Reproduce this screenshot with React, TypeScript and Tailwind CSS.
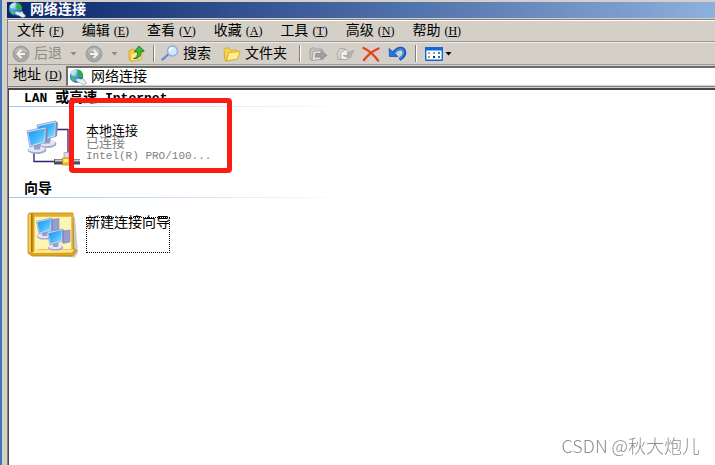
import type { ReactNode } from 'react';

const FONT = 'font-["Liberation_Mono","Noto_Sans_CJK_SC",monospace]';

const menus = [
  { label: '文件', hotkey: 'F' },
  { label: '编辑', hotkey: 'E' },
  { label: '查看', hotkey: 'V' },
  { label: '收藏', hotkey: 'A' },
  { label: '工具', hotkey: 'T' },
  { label: '高级', hotkey: 'N' },
  { label: '帮助', hotkey: 'H' },
];

function Hotkey({ letter }: { letter: string }) {
  return (
    <span className="ml-1 font-['Liberation_Serif',serif] text-xs">
      (<span className="underline underline-offset-1">{letter}</span>)
    </span>
  );
}

function GlobeIcon() {
  return (
    <svg width="18" height="16" viewBox="0 0 18 16" className="shrink-0">
      <defs>
        <radialGradient id="globe" cx="0.35" cy="0.3" r="0.8">
          <stop offset="0" stopColor="#b8e6ff" />
          <stop offset="0.45" stopColor="#2f8fe8" />
          <stop offset="1" stopColor="#0a3fa0" />
        </radialGradient>
      </defs>
      <circle cx="7.500" cy="7" r="6.700" fill="url(#globe)" />
      <path d="M1.500 4.500C3 1.500 5.500 .3 7.500 .6L7.800 2.400 6 3.400 5.400 5.400 3.600 6.400Z" fill="#bfe8d8" />
      <path d="M8.500 1.200 11.500 1.500l2.300 3.300.2 3-2.600 1.200-1.800-2L8 5.500 9 3.500Z" fill="#2fae3a" />
      <path d="M2 8 5.500 8.500l1.500 2-1.500 2.400L3 11.300Z" fill="#48c052" />
      <path d="M7 10.500C8.500 8 11 11 13.200 9.800c1.200-.7 2 .2 1.600 1.200l2.600 2.400c.6 1.200-1.400 2.200-2.800 2-2-.2-2.400-1.400-4-1.900C8.800 13 6.500 12.500 7 10.500Z" fill="#dce8f4" stroke="#7f98b4" strokeWidth=".6" />
      <path d="M10.500 12.500 15.500 14.200" stroke="#fff" strokeWidth="1" />
    </svg>
  );
}

function RoundArrow({ flip = false }: { flip?: boolean }) {
  return (
    <svg width="18" height="18" viewBox="0 0 18 18" className={flip ? 'shrink-0 -scale-x-100' : 'shrink-0'}>
      <circle cx="9" cy="9" r="8" fill="#a6a6a3" stroke="#989894" strokeWidth=".8" />
      <path d="M2.500 8a6.600 6 0 0 1 13 0c-3-2-9-2-13 0Z" fill="#bdbdba" />
      <path d="M9.500 5 5.500 9l4 4M6 9h7" stroke="#f2f2f0" strokeWidth="2" fill="none" />
    </svg>
  );
}

function UpFolderIcon() {
  return (
    <svg width="17" height="17" viewBox="0 0 17 17">
      <path d="M1 5.500 5.500 4l2 1.500 6-.5 1 1-1.500 8.500L3 16.500 1 14Z" fill="#f7cf4a" stroke="#d09c20" strokeWidth=".8" />
      <path d="M3 8.500 13.500 7l1.500 1.200-2.500 6.300L3 16Z" fill="#ffeb8a" stroke="#dcab34" strokeWidth=".6" />
      <path d="M5.500 13.500c3-.5 4.300-2.800 4-6.800H6.200L11 1l5.300 5-3.200.7c.4 4.500-2.600 7.300-7.600 6.800Z" fill="#3fb83c" stroke="#17691d" strokeWidth=".8" />
    </svg>
  );
}

function SearchIcon() {
  return (
    <svg width="18" height="17" viewBox="0 0 18 17">
      <path d="m7 9.500-5.500 5" stroke="#4a7fc4" strokeWidth="2.200" strokeLinecap="round" />
      <path d="m6.500 9.500-5 4.500" stroke="#8cb8ec" strokeWidth=".8" />
      <circle cx="11.500" cy="6" r="5" fill="#c9eaff" stroke="#98a8d8" strokeWidth="1.300" />
      <path d="M8.500 6a3.200 3.200 0 0 1 3-3" stroke="#fff" strokeWidth="1.500" fill="none" />
    </svg>
  );
}

function FolderIcon() {
  return (
    <svg width="18" height="16" viewBox="0 0 18 16">
      <path d="M1 3.500 2.200 2H6l1.500 2H14v3L4.500 15 2 14.500Z" fill="#f8d250" stroke="#d8a828" strokeWidth=".9" />
      <path d="M5.500 6.500 17 5.500 14.500 13 3.500 15Z" fill="#ffee96" stroke="#dcab28" strokeWidth="1" />
    </svg>
  );
}

function MoveToIcon() {
  return (
    <svg width="19" height="16" viewBox="0 0 19 16" stroke="#a2a2a0" strokeWidth=".9">
      <path d="M1 3 5 1.500 6.500 3H13v10L3 14.500 1 13Z" fill="#c4c3c0" />
      <path d="M4 5.500 14.500 4.500V13L3 14.500Z" fill="#e2e1de" />
      <path d="M7 7.500h5V5l6 4.300-6 4.200V11H6Z" fill="#a0a09e" stroke="#8c8c8a" />
    </svg>
  );
}

function CopyToIcon() {
  return (
    <svg width="18" height="16" viewBox="0 0 18 16" stroke="#a6a6a4" strokeWidth=".9">
      <path d="M1 7 4 2.500h4.500L11 6l-1 7.500H2Z" fill="#d4d3d0" />
      <path d="M4.500 7.500 8 4h3l2.500 3-1.500 6.500H5Z" fill="#efeeeb" />
      <path d="M7.500 9.500H12L11 7l6.500-2.500-3 7L12.500 12Z" fill="#b4b3b0" />
    </svg>
  );
}

function DeleteIcon() {
  return (
    <svg width="18" height="16" viewBox="0 0 18 16">
      <path d="M1.500 2C6 4 12 9 16 14.500M16.500 2.500C11 5 5 10 2 14" stroke="#e8421a" strokeWidth="2.300" strokeLinecap="round" fill="none" />
    </svg>
  );
}

function UndoIcon() {
  return (
    <svg width="19" height="16" viewBox="0 0 19 16">
      <path d="M5 7.500C8 3.500 10.500 2.400 13 2.500c4 .4 4.600 5.500 1.800 8.200L11.500 13.500" stroke="#1459bc" strokeWidth="3.400" fill="none" />
      <path d="M1 2.500 1.500 10.500h8.500L7.500 8 4.500 5.500Z" fill="#2476d8" stroke="#1459bc" strokeWidth=".8" />
      <path d="M6 7C9 3.500 11 2.800 13 2.900c3.200.3 3.600 4.600 1.300 7L11.500 12.800" stroke="#3d8ee8" strokeWidth="1.500" fill="none" />
    </svg>
  );
}

function ViewsIcon() {
  return (
    <svg width="18" height="14" viewBox="0 0 18 14">
      <rect x=".7" y=".7" width="16.600" height="12.600" rx=".8" fill="#fff" stroke="#1267db" strokeWidth="1.400" />
      <path d="M0 0h18v3.500H0Z" fill="#1267db" />
      <path d="M3 5h2v2H3Z" fill="#a4a4c4" />
      <path d="M8 5h2v2H8Z" fill="#7aa0dc" />
      <path d="M13 5h2v2h-2Z" fill="#28a028" />
      <path d="M3 9h2v2H3Z" fill="#e09020" />
      <path d="M8 9h2v2H8Z" fill="#1030a0" />
      <path d="M13 9h2v2h-2Z" fill="#3868a8" />
    </svg>
  );
}

function Caret({ dim = false }: { dim?: boolean }) {
  return (
    <svg width="7" height="4" viewBox="0 0 7 4">
      <path d="M.5 0h6l-3 3.500Z" fill={dim ? '#8c8a85' : '#000'} />
    </svg>
  );
}

// One CRT monitor with its base, shared by both large icons
function Monitor({ x, y, scale = 1 }: { x: number; y: number; scale?: number }) {
  return (
    <g transform={`translate(${x} ${y}) scale(${scale})`}>
      <ellipse cx="10" cy="23" rx="9.500" ry="4" fill="#a4a6c8" />
      <ellipse cx="9.500" cy="22" rx="8.500" ry="3.200" fill="#e4e6f5" />
      <path d="M7 17 14 16 13 22.500H7Z" fill="#9a9dc4" />
      <path d="M18.500 0 21 2 20 15 17.500 16.500Z" fill="#8087b8" />
      <path d="M0 4 19 0 18.500 15.500 3 20Z" fill="#dfe8f8" stroke="#6f86c4" strokeWidth=".7" />
      <path d="M1.200 5.200 17.900 1.400 17.400 14.500 3.800 18.500Z" fill="url(#screen)" />
    </g>
  );
}

function ScreenGradient() {
  return (
    <defs>
      <linearGradient id="screen" x1="0" y1="0" x2="1" y2="1">
        <stop offset="0" stopColor="#1f8eee" />
        <stop offset="0.55" stopColor="#46b8fa" />
        <stop offset="1" stopColor="#8fe2ff" />
      </linearGradient>
    </defs>
  );
}

function LanIcon() {
  return (
    <svg width="54" height="48" viewBox="0 0 54 48" className="shrink-0">
      <ScreenGradient />
      <path d="M30 9.500h12V34M8 32v9.500h20" stroke="#2d2470" strokeWidth="1.300" fill="none" />
      <Monitor x={11} y={1} />
      <Monitor x={1} y={7} />
      <path d="M38 32.500h5v6h-5Z" fill="#d9dce6" stroke="#8c90a0" strokeWidth=".6" />
      <path d="M28 39h26v5.500H28Z" fill="#4c4e56" />
      <path d="M29 39.500h25v2H29Z" fill="#c6c8ce" />
      <path d="M36.500 38h7v7h-7Z" fill="#f2c02a" stroke="#b4830c" strokeWidth=".7" />
      <path d="M37.500 39h4.500v3h-4.500Z" fill="#ffeb90" />
    </svg>
  );
}

function WizardIcon() {
  return (
    <svg width="54" height="48" viewBox="0 0 54 48" className="shrink-0">
      <ScreenGradient />
      <path d="M4 44 49 46.500l3-5-3-36Z" fill="#9c9a92" opacity=".5" />
      <path d="M2 3.500 3.500 2H47l.8 35.500 3.200 2-4.500 5.500H6L2 42Z" fill="#dba420" stroke="#b9850c" strokeWidth=".8" />
      <path d="M2.500 3H5v38.500L2.500 41Z" fill="#f1cb50" />
      <path d="M5.800 3v38" stroke="#a66f08" strokeWidth="1.400" />
      <path d="M8.500 5.500H45.500V38H12L8.500 40Z" fill="#fdf5b4" />
      <path d="M8.500 2.500H47V5.500H8.500Z" fill="#e5ad25" />
      <path d="M6.500 42 10 38.500h38L46 41.500Z" fill="#ffe98c" />
      <path d="M46.300 5v33" stroke="#dbae40" strokeWidth="1.200" />
      <path d="m26 8.500 7-1v12l-7 1.500Z" fill="#9a9dcb" stroke="#7478ac" strokeWidth=".5" />
      <Monitor x={10.5} y={7} scale={0.8} />
      <path d="m37 20 7-1v12l-7 1.500Z" fill="#9a9dcb" stroke="#7478ac" strokeWidth=".5" />
      <Monitor x={21.5} y={18} scale={0.8} />
    </svg>
  );
}

function Separator() {
  return <div className="h-[17px] w-0.5 border-l border-r border-l-[#808080] border-r-white" />;
}

function Section({ title, children }: { title: ReactNode; children: ReactNode }) {
  return (
    <section>
      <h2 className="h-4 pl-[15px] text-[13px] leading-4 font-bold">{title}</h2>
      <div className="h-px w-[340px] bg-linear-to-r from-[#9cc6f0] to-white" />
      <div className="flex items-center gap-1.5 py-[13px] pl-[17px]">{children}</div>
    </section>
  );
}

export default function App() {
  return (
    <div className={`${FONT} flex min-h-screen border-l-2 border-[#4176b8] bg-[#d4d0c8] pt-0.5 pl-[5px] text-black`}>
      <div className="flex min-w-0 flex-1 flex-col">
        <header className="mb-px flex h-4 items-center gap-1 bg-linear-to-r from-[#0a246a] to-[#8eb0dd] pl-px text-white">
          <GlobeIcon />
          <h1 className="text-sm leading-4 font-bold">网络连接</h1>
        </header>

        <div className="flex flex-1 flex-col border-t border-l border-[#808080]">
          <nav className="flex h-[22px] items-center gap-[18px] overflow-hidden border-t border-b border-t-white border-b-[#9c9a96] pl-[9px]">
            {menus.map((m) => (
              <button key={m.hotkey} type="button" className="shrink-0 text-sm leading-5 whitespace-nowrap">
                {m.label}
                <Hotkey letter={m.hotkey} />
              </button>
            ))}
          </nav>

          <div className="flex h-[23px] items-center overflow-hidden border-t border-b border-t-[#ebe9e4] border-b-[#9c9a96] pl-1 text-sm leading-5 whitespace-nowrap *:shrink-0">
            <button type="button" disabled className="flex items-center gap-1 text-[#8c8a85]">
              <RoundArrow />
              后退
            </button>
            <button type="button" disabled aria-label="后退列表" className="px-2"><Caret dim /></button>
            <button type="button" disabled aria-label="前进"><RoundArrow flip /></button>
            <button type="button" disabled aria-label="前进列表" className="px-2"><Caret dim /></button>
            <button type="button" aria-label="向上" className="pr-2 pl-0.5"><UpFolderIcon /></button>
            <Separator />
            <button type="button" className="flex items-center gap-1 pl-1.5">
              <SearchIcon />
              搜索
            </button>
            <button type="button" className="flex items-center gap-1 px-3">
              <FolderIcon />
              文件夹
            </button>
            <Separator />
            <div className="flex items-center gap-2 px-2">
              <button type="button" disabled aria-label="移至"><MoveToIcon /></button>
              <button type="button" disabled aria-label="复制到"><CopyToIcon /></button>
              <button type="button" aria-label="删除"><DeleteIcon /></button>
              <button type="button" aria-label="撤消"><UndoIcon /></button>
            </div>
            <Separator />
            <button type="button" aria-label="查看方式" className="flex items-center gap-0.5 pl-2">
              <ViewsIcon />
              <Caret />
            </button>
          </div>

          <div className="flex h-[22px] items-stretch border-b border-[#808080] pt-px">
            <label htmlFor="address" className="w-[58px] shrink-0 pl-[5px] text-sm leading-[18px] whitespace-nowrap">
              地址
              <Hotkey letter="D" />
            </label>
            <div className="flex min-w-0 flex-1 items-center gap-1 border-t-2 border-b border-l-2 border-t-[#6e6c69] border-b-[#d4d0c8] border-l-[#6e6c69] bg-white pl-px">
              <GlobeIcon />
              <input
                id="address"
                type="text"
                defaultValue="网络连接"
                className="h-4 min-w-0 flex-1 bg-white text-sm leading-4 outline-none"
              />
            </div>
          </div>

          <main className="mt-px flex-1 border-t-2 border-l border-[#48464a] bg-white">
            <Section
              title={
                <>
                  LAN <span className="text-sm leading-4">或高速</span> Internet
                </>
              }
            >
              <LanIcon />
              <div className="relative text-[13px] leading-3">
                <p>本地连接</p>
                <p className="text-[#808080]">已连接</p>
                <p className="text-[11px] leading-3 text-[#808080]">Intel(R) PRO/100...</p>
                {/* Highlight frame */}
                <div className="pointer-events-none absolute -top-7 -left-[17px] h-[75px] w-[163px] rounded-sm border-[5px] border-[#fb1d14]" />
              </div>
            </Section>

            <Section title={<span className="text-sm leading-4">向导</span>}>
              <WizardIcon />
              <button type="button" className="flex h-9 items-start outline outline-dotted outline-black -outline-offset-1 text-sm leading-3">
                新建连接向导
              </button>
            </Section>
          </main>
        </div>
      </div>

      <div className="pointer-events-none fixed right-[15px] bottom-2.5 font-['Noto_Sans_CJK_SC',sans-serif] text-lg leading-5 font-light text-[#8f8f8f]">
        CSDN @秋大炮儿
      </div>
    </div>
  );
}
